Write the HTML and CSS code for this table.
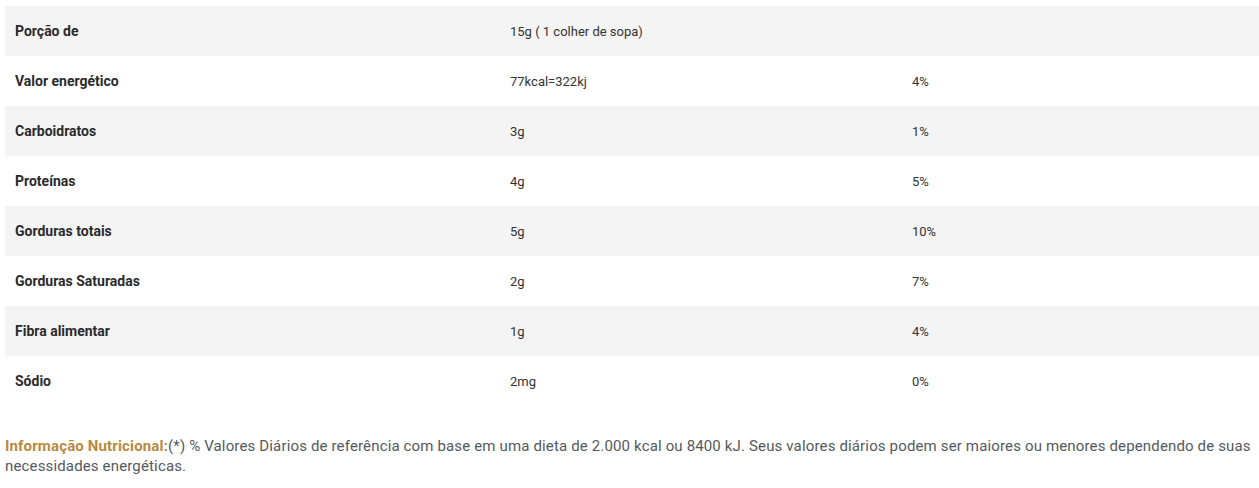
FILE: index.html
```html
<!DOCTYPE html>
<html lang="pt">
<head>
<meta charset="utf-8">
<link rel="stylesheet" href="styles.css">
</head>
<body>
<div class="wrap">
  <table class="nutri">
    <tbody>
      <tr><th>Porção de</th><td>15g ( 1 colher de sopa)</td><td></td></tr>
      <tr><th>Valor energético</th><td>77kcal=322kj</td><td>4%</td></tr>
      <tr><th>Carboidratos</th><td>3g</td><td>1%</td></tr>
      <tr><th>Proteínas</th><td>4g</td><td>5%</td></tr>
      <tr><th>Gorduras totais</th><td>5g</td><td>10%</td></tr>
      <tr><th>Gorduras Saturadas</th><td>2g</td><td>7%</td></tr>
      <tr><th>Fibra alimentar</th><td>1g</td><td>4%</td></tr>
      <tr><th>Sódio</th><td>2mg</td><td>0%</td></tr>
    </tbody>
  </table>
  <p class="note"><strong>Informação Nutricional:</strong>(*) % Valores Diários de referência com base em uma dieta de 2.000 kcal ou 8400 kJ. Seus valores diários podem ser maiores ou menores dependendo de suas necessidades energéticas.</p>
</div>
</body>
</html>
```

FILE: styles.css
```css
html, body {
  margin: 0;
  padding: 0;
  background: #fff;
}
.wrap {
  padding: 6px 0 0 5px;
}
.nutri {
  width: 100%;
  border-collapse: collapse;
  border-spacing: 0;
  font-family: Roboto, "Liberation Sans", sans-serif;
  font-size: 13px;
  color: #333;
}
.nutri tr {
  height: 50px;
}
.nutri tr:nth-child(odd) {
  background: #f4f4f4;
}
.nutri th, .nutri td {
  padding: 0 10px;
  text-align: left;
  vertical-align: middle;
}
.nutri th {
  width: 475px;
  font-size: 14px;
  font-weight: 700;
  color: #2b2b2b;
}
.nutri td:nth-child(2) {
  width: 382px;
}
.note {
  margin: 30px 0 0 0;
  font-family: Roboto, "Liberation Sans", sans-serif;
  font-size: 15px;
  line-height: 20px;
  letter-spacing: 0.15px;
  color: #54595f;
}
.note strong {
  color: #b98a3e;
  font-weight: 700;
}
```
